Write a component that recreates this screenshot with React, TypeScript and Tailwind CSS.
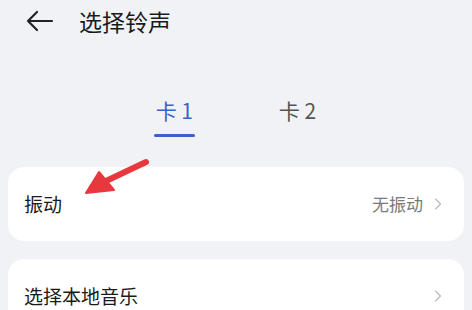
import { ChevronRight } from "lucide-react";

const font = { fontFamily: '"Noto Sans CJK SC", Roboto, sans-serif' };

export default function App() {
  return (
    <div className="w-[472px] h-[310px] overflow-hidden bg-[#f1f2f6] relative" style={font}>
      {/* Header */}
      <div className="flex items-center h-[42px] pl-[25px]">
        <svg width="30" height="24" viewBox="0 0 30 24" fill="none" stroke="#222" strokeWidth="2.2" strokeLinecap="round" strokeLinejoin="round">
          <path d="M27 12H3M12 3L3 12l9 9" />
        </svg>
        <span className="ml-[24px] text-[23px] text-[#1a1a1a] leading-none">选择铃声</span>
      </div>

      {/* Tabs */}
      <div className="flex justify-center gap-[84px] mt-[58px] pr-[2px]">
        <div className="flex flex-col items-center">
          <span className="text-[21px] leading-none text-[#3b63c4]">卡 1</span>
          <div className="w-[41px] h-[3px] bg-[#3b63c4] rounded-full mt-[13px]" />
        </div>
        <div className="flex flex-col items-center">
          <span className="text-[21px] leading-none text-[#555]">卡 2</span>
        </div>
      </div>

      {/* Cards */}
      <div className="mx-[8px] mt-[30px] flex flex-col gap-[18px]">
        <div className="bg-white rounded-[16px] h-[74px] flex items-center pl-[16px] pr-[16px]">
          <span className="text-[19px] text-[#1a1a1a]">振动</span>
          <span className="ml-auto text-[17px] text-[#7a7a7a]">无振动</span>
          <ChevronRight className="w-[20px] h-[20px] ml-[5px] text-[#bbb]" strokeWidth={1.4} />
        </div>
        <div className="bg-white rounded-[16px] h-[75px] flex items-start pl-[16px] pr-[16px] pt-[23px]">
          <span className="text-[19px] text-[#1a1a1a]">选择本地音乐</span>
          <ChevronRight className="w-[20px] h-[20px] ml-auto mt-[4px] text-[#bbb]" strokeWidth={1.4} />
        </div>
      </div>

      {/* Red annotation arrow */}
      <svg className="absolute left-0 top-0" width="472" height="310" viewBox="0 0 472 310">
        <path d="M146 162L106 181" stroke="#e8383d" strokeWidth="6" strokeLinecap="round" />
        <path d="M86 193L99 172L114 190Z" fill="#e8383d" stroke="#e8383d" strokeWidth="2" strokeLinejoin="round" />
      </svg>
    </div>
  );
}
